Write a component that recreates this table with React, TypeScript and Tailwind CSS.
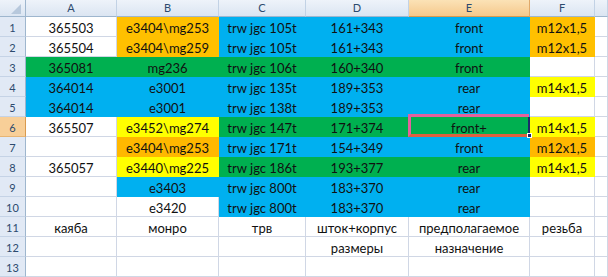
import { Fragment } from "react";

type Fill = "w" | "b" | "g" | "o" | "o2" | "y";

const fillClass: Record<Fill, string> = {
  w: "bg-white border-[#d0d7e5]",
  b: "bg-[#00b0f0] border-[#00b0f0]",
  g: "bg-[#00b050] border-[#00b050]",
  o: "bg-[#ffc000] border-[#ffc000]",
  o2: "bg-[#ffb800] border-[#ffb800]",
  y: "bg-[#ffff00] border-[#ffff00]",
};

const columns = ["A", "B", "C", "D", "E", "F", ""];

// each row: [text, fill] for A..G
const rows: [string, Fill][][] = [
  [["365503", "w"], ["e3404\\mg253", "o"], ["trw jgc 105t", "b"], ["161+343", "b"], ["front", "b"], ["m12x1,5", "o"], ["", "w"]],
  [["365504", "w"], ["e3404\\mg259", "o"], ["trw jgc 105t", "b"], ["161+343", "b"], ["front", "b"], ["m12x1,5", "o"], ["", "w"]],
  [["365081", "g"], ["mg236", "g"], ["trw jgc 106t", "g"], ["160+340", "g"], ["front", "g"], ["", "w"], ["", "w"]],
  [["364014", "b"], ["e3001", "b"], ["trw jgc 135t", "b"], ["189+353", "b"], ["rear", "b"], ["m14x1,5", "y"], ["", "w"]],
  [["364014", "b"], ["e3001", "b"], ["trw jgc 138t", "b"], ["189+353", "b"], ["rear", "b"], ["", "w"], ["", "w"]],
  [["365507", "w"], ["e3452\\mg274", "y"], ["trw jgc 147t", "g"], ["171+374", "g"], ["front+", "g"], ["m14x1,5", "y"], ["", "w"]],
  [["", "w"], ["e3404\\mg253", "o2"], ["trw jgc 171t", "b"], ["154+349", "b"], ["front", "b"], ["m12x1,5", "o2"], ["", "w"]],
  [["365057", "w"], ["e3440\\mg225", "y"], ["trw jgc 186t", "g"], ["193+377", "g"], ["rear", "g"], ["m14x1,5", "y"], ["", "w"]],
  [["", "w"], ["e3403", "b"], ["trw jgc 800t", "b"], ["183+370", "b"], ["rear", "b"], ["", "w"], ["", "w"]],
  [["", "w"], ["e3420", "w"], ["trw jgc 800t", "b"], ["183+370", "b"], ["rear", "b"], ["", "w"], ["", "w"]],
  [["каяба", "w"], ["монро", "w"], ["трв", "w"], ["шток+корпус", "w"], ["предполагаемое", "w"], ["резьба", "w"], ["", "w"]],
  [["", "w"], ["", "w"], ["", "w"], ["размеры", "w"], ["назначение", "w"], ["", "w"], ["", "w"]],
  [["", "w"], ["", "w"], ["", "w"], ["", "w"], ["", "w"], ["", "w"], ["", "w"]],
];

function SelectionBox() {
  return (
    <div className="pointer-events-none absolute -top-[3px] -left-px -bottom-px right-0 z-10">
      <div className="absolute inset-0 border-[3px] border-r-0 border-[#e4619d] border-b-[#e0603f]" />
      <div className="absolute -right-px top-[3px] bottom-[2px] w-[2px] bg-[#1c2a6b]" />
      <div className="absolute -right-[3px] -bottom-[1px] w-[5px] h-[5px] bg-[#1c2a6b] border border-white" />
    </div>
  );
}

export default function App() {
  return (
    <div
      className="w-[608px] h-[277px] overflow-hidden bg-white text-[#111] leading-4"
      style={{ fontFamily: "Lato, 'Open Sans', sans-serif" }}
    >
      <div className="grid grid-cols-[26px_91px_102px_87px_103px_121px_65px_13px] grid-rows-[17px_repeat(13,20px)]">
        {/* corner */}
        <div className="relative bg-gradient-to-b from-[#eef3fa] to-[#dbe5f2] border-r border-b border-[#9eb6ce]">
          <svg className="absolute right-[4px] bottom-[2px]" width="10" height="10" viewBox="0 0 10 10">
            <polygon points="10,0 10,10 0,10" fill="#b7c8dc" />
          </svg>
        </div>
        {columns.map((c) => (
          <div
            key={c || "G"}
            className={`flex items-center justify-center text-[11px] text-[#2c4a6e] border-r border-b ${
              c === "E"
                ? "bg-gradient-to-b from-[#fbe2b6] to-[#f5c98c] border-r-[#e0a96a] border-b-[#d99a4f]"
                : "bg-gradient-to-b from-[#eef3fa] to-[#dbe5f2] border-r-[#c2d2e5] border-b-[#9eb6ce]"
            }`}
          >
            {c}
          </div>
        ))}

        {rows.map((row, r) => (
          <Fragment key={r}>
            <div
              className={`flex items-center justify-center pt-[2px] text-[11px] text-[#2c4a6e] border-r border-b ${
                r === 5
                  ? "bg-[#f8cf98] border-r-[#d99a4f] border-b-[#e7b574]"
                  : "bg-[#e1e9f5] border-r-[#9eb6ce] border-b-[#c5d3e6]"
              }`}
            >
              {r + 1}
            </div>
            {row.map(([text, fill], c) => (
              <div
                key={c}
                className={`relative flex items-end justify-center whitespace-nowrap text-[13px] border-r border-b ${fillClass[fill]}`}
              >
                {text}
                {r === 5 && c === 4 && <SelectionBox />}
              </div>
            ))}
          </Fragment>
        ))}
      </div>
    </div>
  );
}
